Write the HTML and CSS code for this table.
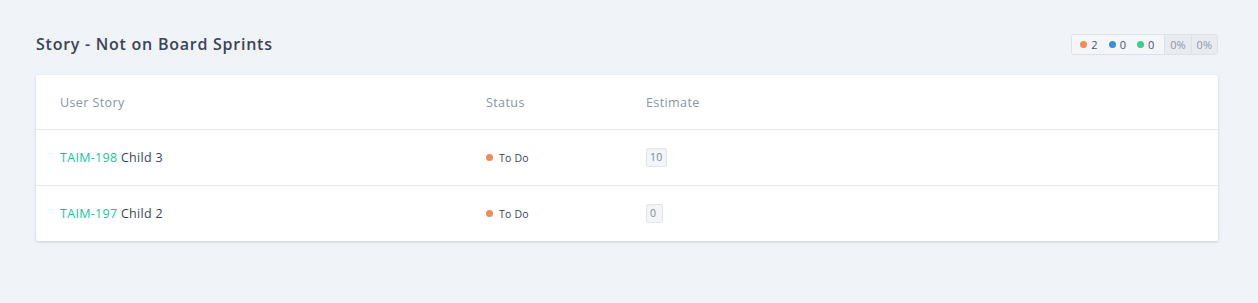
FILE: index.html
```html
<!DOCTYPE html>
<html>
<head>
<meta charset="utf-8">
<link rel="stylesheet" href="styles.css">
</head>
<body>
<div class="page">
  <div class="head">
    <h1 class="title">Story - Not on Board Sprints</h1>
    <div class="summary">
      <div class="counts">
        <span class="cnt"><span class="dot orange"></span>2</span>
        <span class="cnt"><span class="dot blue"></span>0</span>
        <span class="cnt"><span class="dot green"></span>0</span>
      </div>
      <div class="pct">0%</div>
      <div class="pct">0%</div>
    </div>
  </div>
  <div class="card">
    <div class="row hdr">
      <div class="c1">User Story</div>
      <div class="c2">Status</div>
      <div class="c3">Estimate</div>
    </div>
    <div class="row">
      <div class="c1"><span class="key">TAIM-198</span> Child 3</div>
      <div class="c2 status"><span class="dot orange"></span>To Do</div>
      <div class="c3"><span class="est">10</span></div>
    </div>
    <div class="row last">
      <div class="c1"><span class="key">TAIM-197</span> Child 2</div>
      <div class="c2 status"><span class="dot orange"></span>To Do</div>
      <div class="c3"><span class="est">0</span></div>
    </div>
  </div>
</div>
</body>
</html>
```
FILE: styles.css
```css
* { box-sizing: border-box; }
html, body { margin: 0; padding: 0; }
body {
  background: #f0f3f8;
  font-family: "Open Sans", Lato, sans-serif;
  color: #3b4558;
  width: 1258px;
  height: 303px;
  overflow: hidden;
}
.page { padding: 34px 40px 0 36px; }
.head {
  display: flex;
  align-items: center;
  justify-content: space-between;
  height: 21px;
  margin-bottom: 20px;
}
.title {
  margin: 0;
  font-size: 16px;
  font-weight: 600;
  letter-spacing: 0.75px;
  color: #3a4456;
  line-height: 20px;
  margin-top: -2px;
}
.summary {
  display: flex;
  height: 21px;
  border: 1px solid #dde2e9;
  border-radius: 3px;
  overflow: hidden;
  font-size: 11px;
  color: #4a5466;
}
.counts {
  display: flex;
  align-items: center;
  gap: 11px;
  padding: 0 10px 0 8px;
  background: #f4f6f9;
}
.cnt { display: flex; align-items: center; gap: 4px; }
.dot { display: inline-block; width: 7px; height: 7px; border-radius: 50%; }
.orange { background: #ef8d5a; }
.blue { background: #3a8fd5; }
.green { background: #3dcc8c; }
.pct {
  display: flex;
  align-items: center;
  padding: 0 5px;
  background: #e8ebf0;
  border-left: 1px solid #dde2e9;
  color: #8c95a5;
}
.card {
  background: #fff;
  border-radius: 2px;
  box-shadow: 0 1px 3px rgba(40, 50, 70, 0.18);
}
.row {
  display: flex;
  align-items: center;
  height: 56px;
  padding-left: 24px;
  border-bottom: 1px solid #e6e9ee;
  font-size: 12.5px;
  letter-spacing: 0.3px;
}
.row.hdr { height: 55px; color: #8a94a6; font-size: 12.5px; letter-spacing: 0.4px; }
.row.last { height: 55px; border-bottom: none; }
.c1 { width: 426px; }
.c2 { width: 160px; }
.c3 { flex: 1; }
.key { color: #1ec29b; }
.status { display: flex; align-items: center; gap: 6px; font-size: 10.5px; color: #3b4558; letter-spacing: 0.2px; }
.est {
  display: inline-block;
  min-width: 17px;
  padding: 2px 3px;
  font-size: 10.5px;
  line-height: 13px;
  color: #7c8597;
  background: #f3f5f8;
  border: 1px solid #e1e5eb;
  border-radius: 2px;
}
```
